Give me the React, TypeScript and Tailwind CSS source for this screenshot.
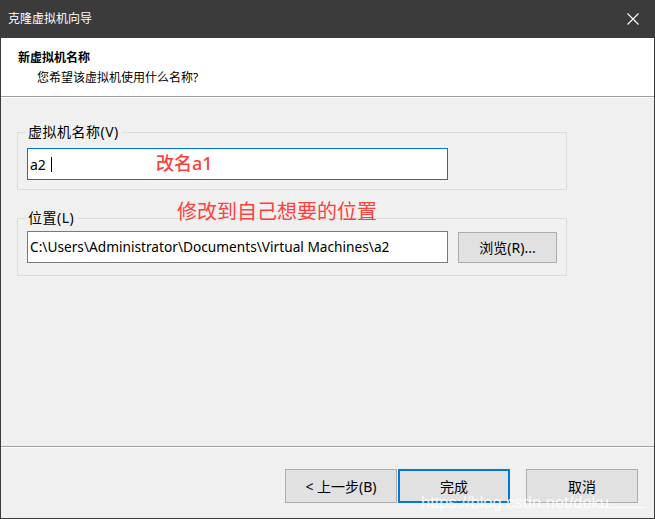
import React from "react";

const ui = "font-['Segoe_UI','Noto_Sans','Noto_Sans_CJK_SC',sans-serif]";

const WinButton = ({ label, primary = false }: { label: string; primary?: boolean }) => (
  <button
    className={`w-[112px] h-[34px] bg-[#e1e1e1] text-[14px] text-black flex items-center justify-center ${
      primary ? "border-2 border-[#0078d7]" : "border border-[#adadad]"
    }`}
  >
    {label}
  </button>
);

const GroupBox = ({ label, className = "", children }: { label: string; className?: string; children: React.ReactNode }) => (
  <div className={`relative w-[550px] h-[58px] border border-[#dcdcdc] pl-[9px] ${className}`}>
    {/* legend sits on the border */}
    <span className="absolute left-[7px] -top-[11px] px-[3px] bg-[#f0f0f0] text-[14px] leading-[20px] tracking-[0.5px] text-black">
      {label}
    </span>
    {children}
  </div>
);

export default function App() {
  return (
    <div className={`w-[655px] h-[519px] flex flex-col bg-[#f0f0f0] border-x border-b border-[#3b3b3b] relative ${ui}`}>
      {/* Title bar */}
      <div className="h-[38px] bg-[#3b3b3b] flex items-center justify-between pl-[7px] pr-[15px] shrink-0">
        <span className="text-white text-[12px]">克隆虚拟机向导</span>
        <svg width="12" height="12" viewBox="0 0 12 12">
          <path d="M0.5 0.5 L11.5 11.5 M11.5 0.5 L0.5 11.5" stroke="#fff" strokeWidth="1.1" />
        </svg>
      </div>

      {/* Header */}
      <div className="h-[58px] bg-white flex flex-col pl-[17px] pt-[12px] shrink-0">
        <span className="text-[12px] leading-[16px] font-bold text-black">新虚拟机名称</span>
        <span className="text-[12px] leading-[16px] mt-[4px] pl-[19px] text-black">您希望该虚拟机使用什么名称?</span>
      </div>
      <div className="h-px bg-[#a0a0a0] shrink-0" />
      <div className="h-px bg-white shrink-0" />

      {/* Body */}
      <div className="flex-1 pl-4 pt-[34px]">
        <GroupBox label="虚拟机名称(V)" className="pt-[15px]">
          <div className="relative w-[421px] h-[32px] bg-white border border-[#0078d7] flex items-center pl-[2px]">
            <span className="text-[14px] text-black">a2</span>
            <span className="ml-[5px] w-px h-[15px] bg-black" />
            <span className="absolute left-[128px] top-[2px] text-[18px] leading-[24px] font-medium text-[#ff4040]">改名a1</span>
          </div>
        </GroupBox>

        <GroupBox label="位置(L)" className="mt-[28px] pt-[12px]">
          <div className="flex items-start gap-[10px]">
            <div className="w-[421px] h-[32px] bg-white border border-[#7a7a7a] flex items-center pl-[2px]">
              <span className="text-[13.7px] text-black whitespace-nowrap">
                C:\Users\Administrator\Documents\Virtual Machines\a2
              </span>
            </div>
            <button className="mt-px w-[99px] h-[31px] bg-[#e1e1e1] border border-[#adadad] text-[14px] text-black">
              浏览(R)...
            </button>
          </div>
        </GroupBox>
      </div>

      {/* annotation over location box */}
      <span className="absolute left-[176px] top-[198px] text-[20px] leading-[28px] text-[#ff4040]">修改到自己想要的位置</span>

      {/* Footer */}
      <div className="h-px bg-[#a0a0a0] shrink-0" />
      <div className="h-px bg-white shrink-0" />
      <div className="h-[70px] flex items-start pt-[21px] pr-4 shrink-0">
        <div className="ml-auto flex gap-px">
          <WinButton label="< 上一步(B)" />
          <WinButton label="完成" primary />
        </div>
        <div className="ml-4">
          <WinButton label="取消" />
        </div>
      </div>

      {/* watermark */}
      <span className="absolute left-[420px] top-[493px] text-[16.5px] leading-[18px] font-['Liberation_Sans',sans-serif] text-white/80 pointer-events-none">
        https://blog.csdn.net/deku
      </span>
      <span className="absolute left-[600px] top-[507px] w-[44px] h-px bg-white/80" />
    </div>
  );
}
